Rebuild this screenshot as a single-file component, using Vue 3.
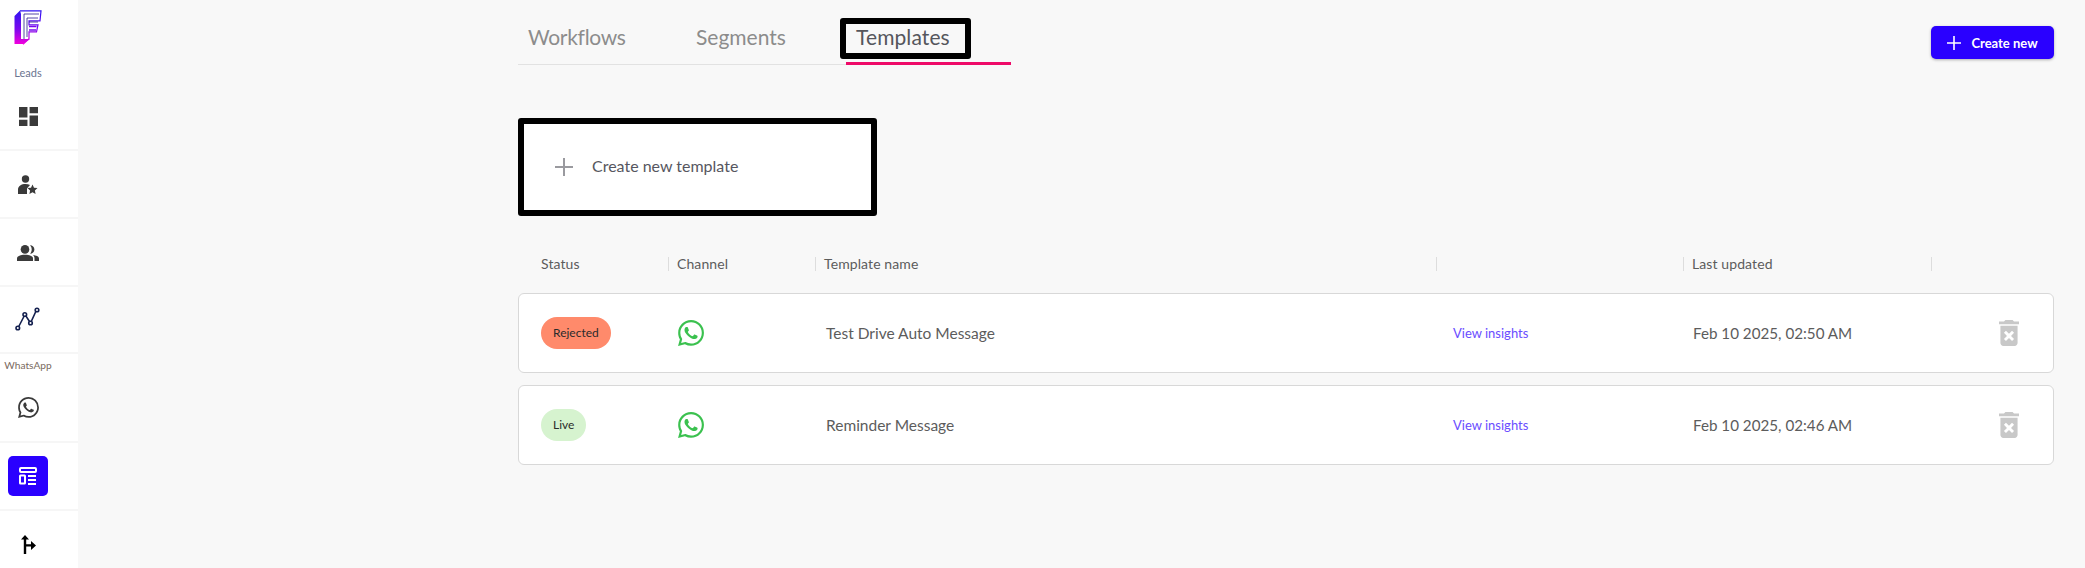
<script setup>
const whatsapp = "M17.472 14.382c-.297-.149-1.758-.867-2.03-.967-.273-.099-.471-.148-.67.15-.197.297-.767.966-.94 1.164-.173.199-.347.223-.644.075-.297-.15-1.255-.463-2.39-1.475-.883-.788-1.48-1.761-1.653-2.059-.173-.297-.018-.458.13-.606.134-.133.298-.347.446-.52.149-.174.198-.298.298-.497.099-.198.05-.371-.025-.52-.075-.149-.669-1.612-.916-2.207-.242-.579-.487-.5-.669-.51-.173-.008-.371-.01-.57-.01-.198 0-.52.074-.792.372-.272.297-1.04 1.016-1.04 2.479 0 1.462 1.065 2.875 1.213 3.074.149.198 2.096 3.2 5.077 4.487.709.306 1.262.489 1.694.625.712.227 1.36.195 1.871.118.571-.085 1.758-.719 2.006-1.413.248-.694.248-1.289.173-1.413-.074-.124-.272-.198-.57-.347m-5.421 7.403h-.004a9.87 9.87 0 01-5.031-1.378l-.361-.214-3.741.982.998-3.648-.235-.374a9.86 9.86 0 01-1.51-5.26c.001-5.45 4.436-9.884 9.888-9.884 2.64 0 5.122 1.03 6.988 2.898a9.825 9.825 0 012.893 6.994c-.003 5.45-4.437 9.884-9.885 9.884m8.413-18.297A11.815 11.815 0 0012.05 0C5.495 0 .16 5.335.157 11.892c0 2.096.547 4.142 1.588 5.945L.057 24l6.305-1.654a11.882 11.882 0 005.683 1.448h.005c6.554 0 11.89-5.335 11.893-11.893a11.821 11.821 0 00-3.48-8.413z"
const trash = "M6 19c0 1.1.9 2 2 2h8c1.1 0 2-.9 2-2V7H6v12zm2.46-7.12l1.41-1.41L12 12.59l2.12-2.12 1.41 1.41L13.41 14l2.12 2.12-1.41 1.41L12 15.41l-2.12 2.12-1.41-1.41L10.59 14l-2.13-2.12zM15.5 4l-1-1h-5l-1 1H5v2h14V4z"
const headers = ['Status', 'Channel', 'Template name', '', 'Last updated', '']
const rows = [
  { status: 'Rejected', cls: 'rejected', name: 'Test Drive Auto Message', date: 'Feb 10 2025, 02:50 AM' },
  { status: 'Live', cls: 'live', name: 'Reminder Message', date: 'Feb 10 2025, 02:46 AM' },
]
</script>

<template>
  <div class="page">
    <aside class="side">
      <div class="logo">
        <svg width="28" height="35" viewBox="0 0 28 35">
          <defs>
            <linearGradient id="lg" x1="0" y1="0" x2="0" y2="1">
              <stop offset="0" stop-color="#2f14f2" />
              <stop offset="0.55" stop-color="#7a08ee" />
              <stop offset="1" stop-color="#f200dc" />
            </linearGradient>
          </defs>
          <path d="M6 .5L.5 6v28H9l7-5H7V4z" fill="url(#lg)" />
          <path d="M6 .8h21l-1 10H15v4h9l-1.500 7H15v7l-6 5.500" fill="none" stroke="url(#lg)" stroke-width="1.200" />
          <path d="M10 29V4h15M13 27V8h11M15 12h9" fill="none" stroke="#2a1a90" stroke-width="0.800" />
          <path d="M15 16.500h7.500M15 20h7" fill="none" stroke="#7a08ee" stroke-width="1.400" />
        </svg>
      </div>
      <div class="label leads">Leads</div>
      <div class="item first">
        <svg width="19" height="19" viewBox="3 3 18 18"><path fill="#3a3a3a" d="M3 13h8V3H3v10zm0 8h8v-6H3v6zm10 0h8V11h-8v10zm0-18v6h8V3h-8z" /></svg>
      </div>
      <div class="item star">
        <svg width="20" height="20" viewBox="0 0 20 20">
          <circle cx="7.500" cy="4" r="3.700" fill="#3a3a3a" />
          <path fill="#3a3a3a" d="M0 19v-4.500C0 11 3.500 9 7.500 9c1.600 0 3.200.3 4.500 1l-3 3.500V19z" />
          <path fill="#3a3a3a" d="M14.500 9.500l1.500 3.200 3.500.4-2.600 2.400.7 3.500-3.100-1.800-3.100 1.800.7-3.500-2.600-2.400 3.500-.4z" />
        </svg>
      </div>
      <div class="item people">
        <svg width="22" height="16" viewBox="0 0 22 16">
          <circle cx="8" cy="4.400" r="4.300" fill="#3a3a3a" />
          <path fill="#3a3a3a" d="M13 .2c2.500 0 4.400 1.900 4.400 4.200S15.500 8.700 13 8.700c1.100-1.100 1.700-2.600 1.700-4.300S14.100 1.300 13 .2z" />
          <path fill="#3a3a3a" d="M0 16v-2.500C0 11 3.800 9.800 8 9.800s8 1.200 8 3.700V16z" />
          <path fill="#3a3a3a" d="M16 10c3 .4 6 1.400 6 3.500V16h-4.500v-2.500c0-1.500-.5-2.600-1.500-3.500z" />
        </svg>
      </div>
      <div class="item chart">
        <svg width="26" height="24" viewBox="0 0 26 24" fill="none" stroke="#14204f" stroke-width="1.600">
          <path d="M3.500 20L10 7.500 15.500 16 21.500 3" />
          <circle cx="2.800" cy="21" r="1.800" fill="#fff" />
          <circle cx="9.800" cy="7.500" r="1.800" fill="#fff" />
          <circle cx="15.500" cy="16" r="1.800" fill="#fff" />
          <circle cx="22" cy="3" r="1.800" fill="#fff" />
        </svg>
      </div>
      <div class="label wa">WhatsApp</div>
      <div class="item waicon">
        <svg width="21" height="21" viewBox="0 0 24 24"><path fill="#3a3a3a" :d="whatsapp" /></svg>
      </div>
      <div class="item tpl">
        <div class="tplbtn">
          <svg width="20" height="20" viewBox="0 0 20 20" fill="none" stroke="#fff" stroke-width="2">
            <rect x="2" y="2" width="16" height="4" rx="1" />
            <rect x="2" y="9.500" width="5" height="8" rx="0.500" />
            <path d="M10 10h8M10 14h8M10 18h8" />
          </svg>
        </div>
      </div>
      <div class="item fork">
        <svg width="15" height="19" viewBox="0 0 15 19" fill="#000">
          <path d="M4 0L0 4.500h2.800V19h2.400V11.500H10V15l5-4.500-5-4.500v3.200H5.200V4.500H8z" />
        </svg>
      </div>
    </aside>

    <main class="main">
      <div class="top">
        <nav class="tabs">
          <div class="tab w1">Workflows</div>
          <div class="tab w2">Segments</div>
          <div class="tab w3 active">
            Templates
            <span class="mark"></span>
          </div>
        </nav>
        <button class="btn">
          <svg width="14" height="14" viewBox="0 0 14 14"><path d="M7 0v14M0 7h14" stroke="#fff" stroke-width="1.600" /></svg>
          <span>Create new</span>
        </button>
      </div>

      <div class="newbox">
        <svg width="18" height="18" viewBox="0 0 18 18"><path d="M9 0v18M0 9h18" stroke="#9a9a9f" stroke-width="2" /></svg>
        <span class="newtext">Create new template</span>
      </div>

      <div class="thead">
        <div v-for="(h, i) in headers" :key="i" class="th" :class="{ nosep: i === 0 }">{{ h }}</div>
      </div>

      <div v-for="r in rows" :key="r.name" class="row">
        <div class="c1"><span class="badge" :class="r.cls">{{ r.status }}</span></div>
        <div class="c2">
          <svg width="26" height="26" viewBox="0 0 24 24"><path fill="#3bc14f" :d="whatsapp" /></svg>
        </div>
        <div class="c3">{{ r.name }}</div>
        <div class="c4">View insights</div>
        <div class="c5">{{ r.date }}</div>
        <div class="c6">
          <svg width="20" height="26" viewBox="5 3 14 18" preserveAspectRatio="none"><path fill="#c8c8c8" :d="trash" /></svg>
        </div>
      </div>
    </main>
  </div>
</template>

<style>
html, body { margin: 0; overflow: hidden; background: #f8f8f8; }
</style>

<style scoped>
.page {
  display: flex;
  height: 568px;
  overflow: hidden;
  background: #f8f8f8;
  font-family: "Lato", "Noto Sans", sans-serif;
  color: #4a4a4a;
}
.side {
  width: 78px;
  flex: none;
  background: #fff;
  display: flex;
  flex-direction: column;
}
.logo { height: 60px; padding: 10px 0 0 14px; box-sizing: border-box; }
.label { text-align: center; font-size: 11px; color: #6b7590; line-height: 14px; }
.leads { width: 56px; height: 20px; margin-top: 6px; }
.wa { width: 56px; color: #7a6a60; font-size: 10.2px; height: 20px; padding-top: 4px; box-sizing: border-box; }
.item {
  display: flex;
  align-items: center;
  justify-content: center;
  width: 78px;
  box-sizing: border-box;
  border-bottom: 2px solid #f6f6f6;
  padding-right: 22px;
}
.first { height: 65px; padding-bottom: 1px; }
.star { height: 68px; padding-top: 2px; }
.people { height: 68px; padding-top: 2px; }
.chart { height: 68px; }
.waicon { height: 69px; }
.tpl { height: 68px; }
.fork { height: 57px; border-bottom: 0; padding-top: 10px; }
.tplbtn {
  width: 40px;
  height: 40px;
  border-radius: 5px;
  background: #2a00ff;
  display: flex;
  align-items: center;
  justify-content: center;
}

.main { flex: 1; padding: 0 31px 0 440px; min-width: 0; }
.top { display: flex; justify-content: space-between; }
.tabs {
  display: flex;
  height: 65px;
  box-sizing: border-box;
  border-bottom: 1px solid #e2e2e2;
}
.tab {
  position: relative;
  height: 65px;
  box-sizing: border-box;
  padding: 23px 0 0 10px;
  font-size: 21px;
  line-height: 28px;
  color: #8c8c8c;
}
.w1 { width: 168px; letter-spacing: -.3px; }
.w2 { width: 160px; }
.w3 { width: 165px; color: #55565c; border-bottom: 3px solid #ee0a68; letter-spacing: .1px; }
.mark {
  position: absolute;
  left: -6px;
  top: 18px;
  width: 131px;
  height: 41px;
  box-sizing: border-box;
  border: 6px solid #000;
  border-radius: 3px;
}
.btn {
  margin-top: 26px;
  width: 123px;
  height: 33px;
  border: 0;
  border-radius: 5px;
  background: #2a00ff;
  color: #fff;
  font-family: inherit;
  font-size: 13px;
  font-weight: 700;
  display: flex;
  align-items: center;
  justify-content: center;
  gap: 10px;
  box-shadow: 0 1px 3px rgba(0, 0, 0, .3);
}
.newbox {
  margin-top: 53px;
  width: 359px;
  height: 98px;
  box-sizing: border-box;
  border: 6px solid #000;
  border-radius: 3px;
  background: #fff;
  display: flex;
  align-items: center;
  padding-left: 31px;
  gap: 19px;
  font-size: 16px;
  color: #565660;
}
.newtext { padding-bottom: 3px; }
.thead {
  display: grid;
  grid-template-columns: 150px 147px 621px 247px 248px 123px;
  margin-top: 38px;
  height: 20px;
  margin-bottom: 19px;
  align-items: center;
}
.th {
  font-size: 14px;
  line-height: 14px;
  letter-spacing: .1px;
  color: #5c5c5c;
  padding-left: 8px;
  height: 14px;
  border-left: 1px solid #ddd;
}
.th.nosep { border-left: 0; padding-left: 23px; }
.row {
  display: grid;
  grid-template-columns: 149px 147px 621px 247px 248px 122px;
  height: 80px;
  box-sizing: border-box;
  background: #fff;
  border: 1px solid #d8d8d8;
  border-radius: 6px;
  margin-bottom: 12px;
  align-items: center;
  font-size: 15.5px;
  color: #5c5c5c;
}
.c1 { padding-left: 22px; }
.c2 { padding-left: 10px; display: flex; }
.c3 { padding-left: 11px; padding-bottom: 1px; }
.c4 { padding-left: 17px; font-size: 13px; color: #6a4dff; padding-bottom: 1px; }
.c5 { padding-left: 10px; font-size: 15.2px; padding-bottom: 1px; }
.c6 { padding-left: 68px; display: flex; }
.badge {
  display: inline-block;
  height: 32px;
  line-height: 32px;
  border-radius: 16px;
  padding: 0 12px;
  font-size: 12px;
  color: #2b2b2b;
}
.rejected { background: #ff8a6b; }
.live { background: #d6f3cf; }
</style>
